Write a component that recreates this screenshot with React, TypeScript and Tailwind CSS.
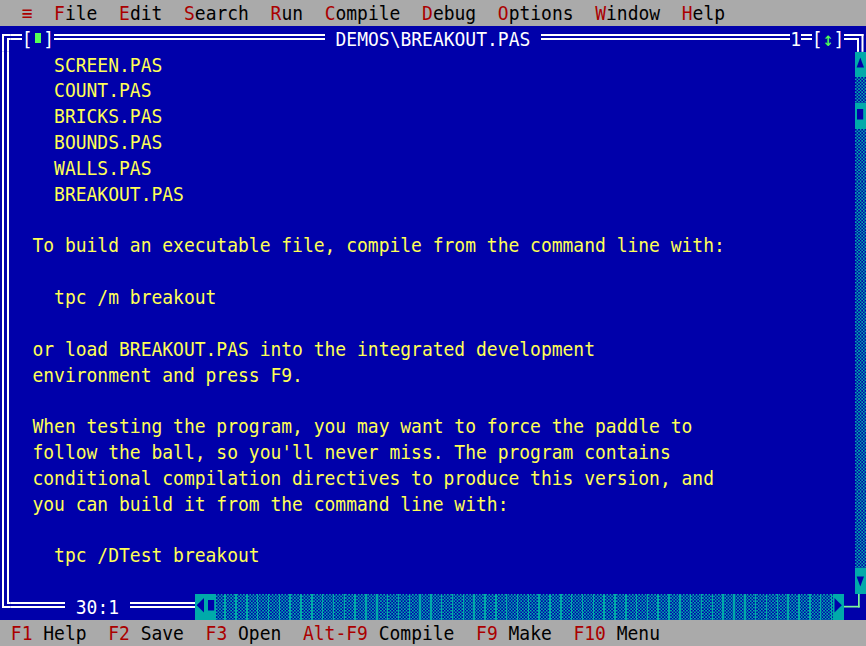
import React from "react";

const lines: string[] = [
  "    SCREEN.PAS",
  "    COUNT.PAS",
  "    BRICKS.PAS",
  "    BOUNDS.PAS",
  "    WALLS.PAS",
  "    BREAKOUT.PAS",
  "",
  "  To build an executable file, compile from the command line with:",
  "",
  "    tpc /m breakout",
  "",
  "  or load BREAKOUT.PAS into the integrated development",
  "  environment and press F9.",
  "",
  "  When testing the program, you may want to force the paddle to",
  "  follow the ball, so you'll never miss. The program contains",
  "  conditional compilation directives to produce this version, and",
  "  you can build it from the command line with:",
  "",
  "    tpc /DTest breakout",
  "",
];

const H = 25.84;
const W = 10.825;

function Dbl({ w }: { w: string }) {
  return (
    <div className={`${w} h-full shrink-0`}>
      <div className="mt-[8px] h-[6px] border-y-2 border-white" />
    </div>
  );
}

function VBar() {
  return (
    <div className="w-[10.825px] h-full shrink-0">
      <div className="ml-[2px] w-[7px] h-full border-x-2 border-white" />
    </div>
  );
}

function TL() {
  return (
    <svg width={W} height={H} className="shrink-0 block">
      <rect x={2} y={8} width={2} height={H - 8} fill="#fff" />
      <rect x={2} y={8} width={W - 2} height={2} fill="#fff" />
      <rect x={7} y={12} width={2} height={H - 12} fill="#fff" />
      <rect x={7} y={12} width={W - 7} height={2} fill="#fff" />
    </svg>
  );
}

function TR() {
  return (
    <svg width={W} height={H} className="shrink-0 block">
      <rect x={0} y={8} width={8.5} height={2} fill="#fff" />
      <rect x={6.5} y={8} width={2} height={H - 8} fill="#fff" />
      <rect x={0} y={12} width={4} height={2} fill="#fff" />
      <rect x={2} y={12} width={2} height={H - 12} fill="#fff" />
    </svg>
  );
}

function BL() {
  return (
    <svg width={W} height={H} className="shrink-0 block">
      <rect x={2} y={0} width={2} height={14} fill="#fff" />
      <rect x={2} y={12} width={W - 2} height={2} fill="#fff" />
      <rect x={7} y={0} width={2} height={10} fill="#fff" />
      <rect x={7} y={8} width={W - 7} height={2} fill="#fff" />
    </svg>
  );
}

function Resize() {
  return (
    <svg width={W * 2} height={H} className="shrink-0 block">
      <rect x={0} y={11.8} width={15.7} height={1.7} fill="#7cf59a" />
      <rect x={14} y={0} width={1.7} height={13.5} fill="#7cf59a" />
    </svg>
  );
}

function ArrowCell({ dir }: { dir: "up" | "down" | "left" | "right" | "thumb" }) {
  let shape: React.ReactNode = null;
  if (dir === "up") shape = <polygon points="5.3,5.5 1.6,15.5 9,15.5" fill="#0000aa" />;
  if (dir === "down") shape = <polygon points="1.6,8.5 9,8.5 5.3,18.5" fill="#0000aa" />;
  if (dir === "left") shape = <polygon points="1.6,11.2 9,4 9,18.5" fill="#0000aa" />;
  if (dir === "right") shape = <polygon points="1.5,4 1.5,18.5 8.8,11.2" fill="#0000aa" />;
  if (dir === "thumb") shape = <rect x={2} y={6} width={6.2} height={10.5} fill="#0000aa" />;
  return (
    <div className="w-[10.825px] h-full shrink-0 bg-[#00aaaa]">
      <svg width={W} height={H} className="block">
        {shape}
      </svg>
    </div>
  );
}

function VTrack() {
  return (
    <div className="w-[10.825px] h-full shrink-0 bg-[#0000aa] [background-image:repeating-conic-gradient(#00aaaa_0%_25%,transparent_0%_50%)] [background-size:3.2px_3.2px]" />
  );
}

function ScrollCell({ i }: { i: number }) {
  if (i === 0) return <ArrowCell dir="up" />;
  if (i === 2) return <ArrowCell dir="thumb" />;
  if (i === 20) return <ArrowCell dir="down" />;
  return <VTrack />;
}

const R = ({ children }: { children: React.ReactNode }) => (
  <span className="text-[#aa0000]">{children}</span>
);

export default function App() {
  return (
    <div className="w-[866px] h-[646px] overflow-hidden bg-[#0000aa] font-['DejaVu_Sans_Mono',monospace] text-[17.98px] leading-[25.84px]">
      {/* menu bar */}
      <div className="h-[25.84px] bg-[#aaaaaa]">
        <div className="text-black whitespace-pre scale-y-[1.1]">
          {"  "}
          <R>≡</R>
          {"  "}
          <R>F</R>ile{"  "}
          <R>E</R>dit{"  "}
          <R>S</R>earch{"  "}
          <R>R</R>un{"  "}
          <R>C</R>ompile{"  "}
          <R>D</R>ebug{"  "}
          <R>O</R>ptions{"  "}
          <R>W</R>indow{"  "}
          <R>H</R>elp
        </div>
      </div>

      {/* top frame */}
      <div className="flex h-[25.84px] text-white whitespace-pre">
        <TL />
        <Dbl w="w-[10.825px]" />
        <div className="w-[32.475px] shrink-0 flex">
          <span className="w-[10.825px] shrink-0 text-center scale-y-[1.1]">[</span>
          <span className="w-[10.825px] shrink-0 flex justify-center pt-[7px]">
            <span className="block w-[6.4px] h-[10px] bg-[#55ff55]" />
          </span>
          <span className="w-[10.825px] shrink-0 text-center scale-y-[1.1]">]</span>
        </div>
        <Dbl w="w-[270.625px]" />
        <div className="w-[216.5px] shrink-0 scale-y-[1.1]">{" DEMOS\\BREAKOUT.PAS "}</div>
        <Dbl w="w-[248.975px]" />
        <div className="w-[10.825px] shrink-0 scale-y-[1.1]">1</div>
        <Dbl w="w-[10.825px]" />
        <div className="w-[32.475px] shrink-0 scale-y-[1.1]">
          [<span className="text-[#55ff55]">↕</span>]
        </div>
        <Dbl w="w-[10.825px]" />
        <TR />
      </div>

      {/* content rows */}
      {lines.map((l, i) => (
        <div key={i} className="flex h-[25.84px]">
          <VBar />
          <div className="w-[844.35px] shrink-0 whitespace-pre text-[#ffff55] scale-y-[1.1]">{l}</div>
          <ScrollCell i={i} />
        </div>
      ))}

      {/* bottom frame */}
      <div className="flex h-[25.84px] text-white whitespace-pre">
        <BL />
        <Dbl w="w-[54.125px]" />
        <div className="w-[64.95px] shrink-0 scale-y-[1.1]">{" 30:1 "}</div>
        <Dbl w="w-[64.95px]" />
        <ArrowCell dir="left" />
        <ArrowCell dir="thumb" />
        <div className="w-[617.025px] h-full shrink-0 bg-[#0000aa] [background-image:repeating-linear-gradient(90deg,transparent_0px_8.5px,#00aaaa_8.5px_10px,transparent_10px_10.825px),repeating-conic-gradient(#00aaaa_0%_25%,transparent_0%_50%)] [background-size:auto,3.2px_3.2px]" />
        <ArrowCell dir="right" />
        <Resize />
      </div>

      {/* status line */}
      <div className="h-[25.84px] bg-[#aaaaaa]">
        <div className="text-black whitespace-pre scale-y-[1.1]">
          {" "}
          <R>F1</R> Help{"  "}
          <R>F2</R> Save{"  "}
          <R>F3</R> Open{"  "}
          <R>Alt-F9</R> Compile{"  "}
          <R>F9</R> Make{"  "}
          <R>F10</R> Menu
        </div>
      </div>
    </div>
  );
}
